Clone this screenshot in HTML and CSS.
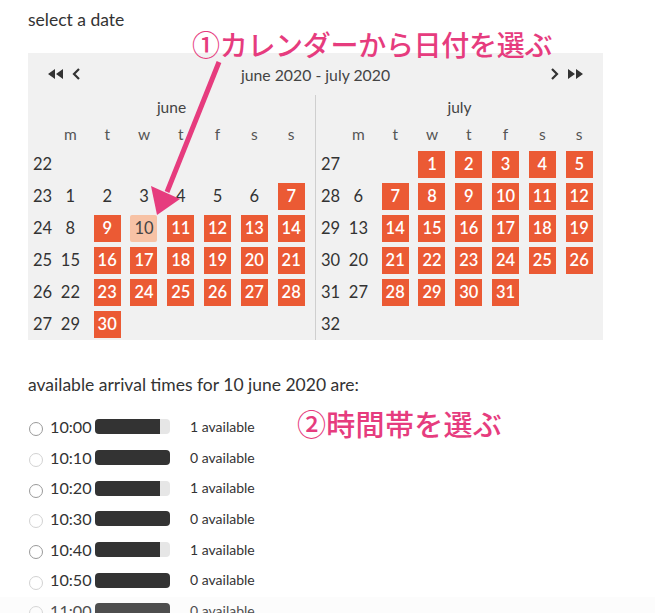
FILE: index.html
```html
<!DOCTYPE html>
<html>
<head>
<meta charset="utf-8">
<link rel="stylesheet" href="styles.css">
</head>
<body>
<div class="page">
  <div class="label">select a date</div>
  <div class="calendar">
    <div class="cal-nav">
      <div class="nav-left">
        <svg class="nav-ico" width="18" height="12" viewBox="0 0 18 12"><path d="M8 1 L1 6 L8 11 Z M16 1 L9 6 L16 11 Z" fill="#333"/></svg>
        <svg class="nav-ico" width="10" height="12" viewBox="0 0 10 12"><path d="M8 1 L3 6 L8 11" fill="none" stroke="#333" stroke-width="2.2"/></svg>
      </div>
      <div class="nav-title">june 2020 - july 2020</div>
      <div class="nav-right">
        <svg class="nav-ico" width="10" height="12" viewBox="0 0 10 12"><path d="M2 1 L7 6 L2 11" fill="none" stroke="#333" stroke-width="2.2"/></svg>
        <svg class="nav-ico" width="18" height="12" viewBox="0 0 18 12"><path d="M2 1 L9 6 L2 11 Z M10 1 L17 6 L10 11 Z" fill="#333"/></svg>
      </div>
    </div>
    <div class="months">
      <div class="month month-first">
        <div class="month-name">june</div>
        <div class="grid">
          <div class="wk"></div><div class="dh">m</div><div class="dh">t</div><div class="dh">w</div><div class="dh">t</div><div class="dh">f</div><div class="dh">s</div><div class="dh">s</div>

          <div class="wk">22</div><div></div><div></div><div></div><div></div><div></div><div></div><div></div>

          <div class="wk">23</div><div class="d">1</div><div class="d">2</div><div class="d">3</div><div class="d">4</div><div class="d">5</div><div class="d">6</div><div class="d"><span class="av">7</span></div>

          <div class="wk">24</div><div class="d">8</div><div class="d"><span class="av">9</span></div><div class="d"><span class="sel">10</span></div><div class="d"><span class="av">11</span></div><div class="d"><span class="av">12</span></div><div class="d"><span class="av">13</span></div><div class="d"><span class="av">14</span></div>

          <div class="wk">25</div><div class="d">15</div><div class="d"><span class="av">16</span></div><div class="d"><span class="av">17</span></div><div class="d"><span class="av">18</span></div><div class="d"><span class="av">19</span></div><div class="d"><span class="av">20</span></div><div class="d"><span class="av">21</span></div>

          <div class="wk">26</div><div class="d">22</div><div class="d"><span class="av">23</span></div><div class="d"><span class="av">24</span></div><div class="d"><span class="av">25</span></div><div class="d"><span class="av">26</span></div><div class="d"><span class="av">27</span></div><div class="d"><span class="av">28</span></div>

          <div class="wk">27</div><div class="d">29</div><div class="d"><span class="av">30</span></div><div></div><div></div><div></div><div></div><div></div>
        </div>
      </div>
      <div class="month">
        <div class="month-name">july</div>
        <div class="grid">
          <div class="wk"></div><div class="dh">m</div><div class="dh">t</div><div class="dh">w</div><div class="dh">t</div><div class="dh">f</div><div class="dh">s</div><div class="dh">s</div>

          <div class="wk">27</div><div></div><div></div><div class="d"><span class="av">1</span></div><div class="d"><span class="av">2</span></div><div class="d"><span class="av">3</span></div><div class="d"><span class="av">4</span></div><div class="d"><span class="av">5</span></div>

          <div class="wk">28</div><div class="d">6</div><div class="d"><span class="av">7</span></div><div class="d"><span class="av">8</span></div><div class="d"><span class="av">9</span></div><div class="d"><span class="av">10</span></div><div class="d"><span class="av">11</span></div><div class="d"><span class="av">12</span></div>

          <div class="wk">29</div><div class="d">13</div><div class="d"><span class="av">14</span></div><div class="d"><span class="av">15</span></div><div class="d"><span class="av">16</span></div><div class="d"><span class="av">17</span></div><div class="d"><span class="av">18</span></div><div class="d"><span class="av">19</span></div>

          <div class="wk">30</div><div class="d">20</div><div class="d"><span class="av">21</span></div><div class="d"><span class="av">22</span></div><div class="d"><span class="av">23</span></div><div class="d"><span class="av">24</span></div><div class="d"><span class="av">25</span></div><div class="d"><span class="av">26</span></div>

          <div class="wk">31</div><div class="d">27</div><div class="d"><span class="av">28</span></div><div class="d"><span class="av">29</span></div><div class="d"><span class="av">30</span></div><div class="d"><span class="av">31</span></div><div></div><div></div>

          <div class="wk">32</div><div></div><div></div><div></div><div></div><div></div><div></div><div></div>
        </div>
      </div>
    </div>
  </div>

  <div class="times-label">available arrival times for 10 june 2020 are:</div>
  <div class="slots">
    <div class="slot"><span class="radio"></span><span class="time">10:00</span><span class="bar"><span class="fill" style="width:87%"></span></span><span class="avail">1 available</span></div>
    <div class="slot"><span class="radio off"></span><span class="time">10:10</span><span class="bar"><span class="fill" style="width:100%"></span></span><span class="avail">0 available</span></div>
    <div class="slot"><span class="radio"></span><span class="time">10:20</span><span class="bar"><span class="fill" style="width:87%"></span></span><span class="avail">1 available</span></div>
    <div class="slot"><span class="radio off"></span><span class="time">10:30</span><span class="bar"><span class="fill" style="width:100%"></span></span><span class="avail">0 available</span></div>
    <div class="slot"><span class="radio"></span><span class="time">10:40</span><span class="bar"><span class="fill" style="width:87%"></span></span><span class="avail">1 available</span></div>
    <div class="slot"><span class="radio off"></span><span class="time">10:50</span><span class="bar"><span class="fill" style="width:100%"></span></span><span class="avail">0 available</span></div>
    <div class="slot"><span class="radio off"></span><span class="time">11:00</span><span class="bar"><span class="fill" style="width:100%"></span></span><span class="avail">0 available</span></div>
  </div>
</div>

<div class="note note1">①カレンダーから日付を選ぶ</div>
<div class="note note2">②時間帯を選ぶ</div>
<svg class="arrow" width="655" height="240" viewBox="0 0 655 240">
  <line x1="219" y1="62" x2="167" y2="192" stroke="#e63c7e" stroke-width="5"/>
  <polygon points="151,186 180,199 157,215" fill="#e63c7e"/>
</svg>
<div class="fade"></div>
</body>
</html>
```

FILE: styles.css
```css
html, body {
  margin: 0;
  padding: 0;
  background: #fff;
}
body {
  font-family: "Lato", "Open Sans", sans-serif;
  color: #333;
  width: 655px;
  height: 613px;
  overflow: hidden;
  position: relative;
}
.page {
  padding: 9px 28px 0 28px;
}
.label {
  font-size: 17.5px;
  line-height: 22px;
  height: 22px;
}
.calendar {
  margin-top: 22px;
  width: 575px;
  background: #f1f1f1;
}
.cal-nav {
  height: 42px;
  display: flex;
  align-items: center;
  justify-content: space-between;
  padding: 0 19px 0 19px;
  box-sizing: border-box;
}
.nav-left, .nav-right {
  display: flex;
  align-items: center;
  gap: 6px;
  width: 40px;
}
.nav-right {
  justify-content: flex-end;
}
.nav-title {
  font-size: 15.8px;
  color: #444;
}
.months {
  display: flex;
}
.month {
  flex: 1;
  padding: 0 5px;
}
.month-first {
  border-right: 1px solid #cfcfcf;
}
.month-name {
  height: 25px;
  line-height: 25px;
  text-align: center;
  font-size: 15.5px;
  color: #444;
}
.grid {
  display: grid;
  grid-template-columns: 19px repeat(7, 36.8px);
  grid-template-rows: 28px repeat(6, 32px);
}
.wk {
  font-size: 16.5px;
  display: flex;
  align-items: center;
  white-space: nowrap;
  color: #333;
}
.dh {
  display: flex;
  align-items: center;
  justify-content: center;
  font-size: 15.5px;
  color: #555;
}
.d {
  display: flex;
  align-items: center;
  justify-content: center;
  font-size: 16.5px;
  color: #333;
}
.av, .sel {
  width: 27px;
  height: 27px;
  display: flex;
  align-items: center;
  justify-content: center;
  background: #eb5a34;
  color: #fff;
  font-weight: 600;
}
.sel {
  background: #f7c2a5;
  color: #444;
  font-weight: 400;
  border-radius: 2px;
}
.times-label {
  margin-top: 34px;
  font-size: 17.5px;
  line-height: 22px;
}
.slots {
  margin-top: 15px;
}
.slot {
  display: flex;
  align-items: center;
  height: 30.7px;
}
.radio {
  width: 12px;
  height: 12px;
  border: 1px solid #9a9a9a;
  border-radius: 50%;
  margin-left: 1px;
  margin-top: 6px;
  background: #fff;
}
.radio.off {
  border-color: #d2d2d2;
}
.time {
  font-size: 16.2px;
  margin-left: 7px;
  width: 45px;
}
.bar {
  width: 75px;
  height: 15px;
  border-radius: 4px;
  background: #e6e6e6;
  overflow: hidden;
  display: flex;
  margin-top: 1px;
}
.fill {
  background: #333;
  height: 100%;
}
.avail {
  font-size: 14px;
  margin-left: 20px;
  color: #333;
}
.note {
  position: absolute;
  color: #e63c7e;
  font-family: "Noto Sans CJK JP", sans-serif;
  font-size: 28px;
  font-weight: 500;
  line-height: 1;
  white-space: nowrap;
}
.note1 {
  left: 192px;
  top: 30px;
  letter-spacing: -0.3px;
}
.note2 {
  left: 297px;
  top: 409px;
  font-size: 29px;
  letter-spacing: 0.3px;
}
.arrow {
  position: absolute;
  left: 0;
  top: 0;
}
.fade {
  position: absolute;
  left: 0;
  right: 0;
  bottom: 0;
  height: 16px;
  background: rgba(238, 238, 238, 0.15);
}
```
